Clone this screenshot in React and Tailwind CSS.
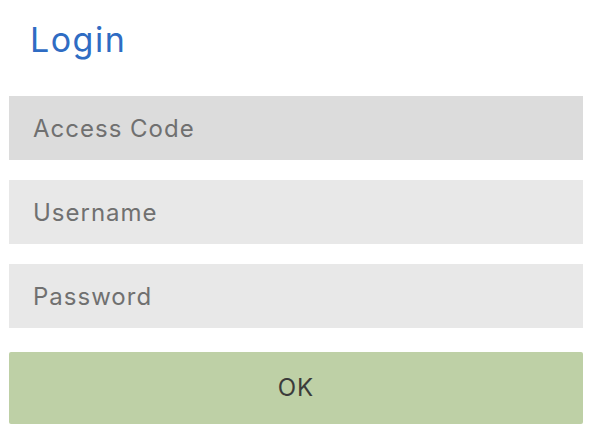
import React from 'react';

function Field({ placeholder, type = "text", active }) {
  return (
    <input
      type={type}
      placeholder={placeholder}
      className={
        (active ? "bg-[#dcdcdc] " : "bg-[#e8e8e8] ") +
        "w-full h-16 px-6 text-[24px] tracking-[1px] text-[#707070] placeholder:text-[#707070] outline-none border-0"
      }
    />
  );
}

export default function App() {
  return (
    <div className="min-h-screen bg-white px-[9px] pt-5 font-['Inter',sans-serif]">
      {/* Title */}
      <h1 className="pl-[21px] text-[34px] leading-10 tracking-[1.5px] text-[#2f6cc3]">Login</h1>

      {/* Form */}
      <form className="mt-9 flex flex-col gap-5" onSubmit={(e) => e.preventDefault()}>
        <Field placeholder="Access Code" active />
        <Field placeholder="Username" />
        <Field placeholder="Password" type="password" />
        <button
          type="submit"
          className="mt-1 h-[72px] w-full rounded-[2px] bg-[#bed0a6] text-[24px] tracking-[1px] text-[#3b3b3b]"
        >
          OK
        </button>
      </form>
    </div>
  );
}
